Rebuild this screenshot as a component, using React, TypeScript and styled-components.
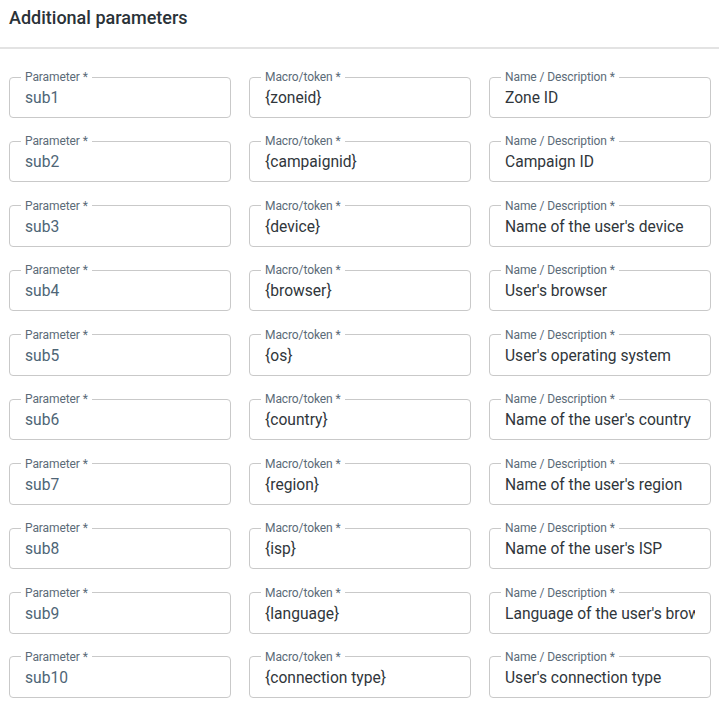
import React from "react";
import styled, { createGlobalStyle } from "styled-components";

const GlobalStyle = createGlobalStyle`
  html, body {
    margin: 0;
    padding: 0;
    background: #ffffff;
  }
  body {
    font-family: Roboto, "Noto Sans", "Liberation Sans", sans-serif;
    -webkit-font-smoothing: antialiased;
  }
`;

const Page = styled.div`
  width: 719px;
  background: #ffffff;
`;

const Header = styled.div`
  height: 47px;
  padding: 0 9px;
  display: flex;
  align-items: flex-start;
  box-sizing: border-box;
`;

const Title = styled.h2`
  margin: 0;
  padding-top: 6px;
  font-size: 18px;
  line-height: 24px;
  font-weight: 500;
  color: #2a3238;
`;

const Divider = styled.hr`
  margin: 0;
  border: 0;
  height: 2px;
  background: #e3e3e3;
`;

const Grid = styled.div`
  display: grid;
  grid-template-columns: repeat(3, 1fr);
  column-gap: 18px;
  row-gap: 17.44px;
  padding: 22px 8px 0 9px;
`;

const Fieldset = styled.fieldset`
  margin: 0;
  min-width: 0;
  padding: 0 15px;
  border: 1px solid #c9c9c9;
  border-radius: 4px;
`;

const Legend = styled.legend`
  margin-left: -4px;
  padding: 0 4px;
  font-size: 12px;
  line-height: 12px;
  color: #5b6b78;
  letter-spacing: -0.1px;
`;

const Value = styled.div<{ $muted?: boolean }>`
  height: 34px;
  line-height: 30px;
  font-size: 15.6px;
  letter-spacing: 0;
  white-space: nowrap;
  overflow: hidden;
  color: ${(p) => (p.$muted ? "#4e6576" : "#30363b")};
`;

type Row = { param: string; macro: string; name: string };

const rows: Row[] = [
  { param: "sub1", macro: "{zoneid}", name: "Zone ID" },
  { param: "sub2", macro: "{campaignid}", name: "Campaign ID" },
  { param: "sub3", macro: "{device}", name: "Name of the user's device" },
  { param: "sub4", macro: "{browser}", name: "User's browser" },
  { param: "sub5", macro: "{os}", name: "User's operating system" },
  { param: "sub6", macro: "{country}", name: "Name of the user's country" },
  { param: "sub7", macro: "{region}", name: "Name of the user's region" },
  { param: "sub8", macro: "{isp}", name: "Name of the user's ISP" },
  { param: "sub9", macro: "{language}", name: "Language of the user's browser" },
  { param: "sub10", macro: "{connection type}", name: "User's connection type" },
];

function Field({ label, value, muted }: { label: string; value: string; muted?: boolean }) {
  return (
    <Fieldset>
      <Legend>{label} *</Legend>
      <Value $muted={muted}>{value}</Value>
    </Fieldset>
  );
}

export default function App() {
  return (
    <Page>
      <GlobalStyle />
      <Header>
        <Title>Additional parameters</Title>
      </Header>
      <Divider />
      <Grid>
        {rows.map((r) => (
          <React.Fragment key={r.param}>
            <Field label="Parameter" value={r.param} muted />
            <Field label="Macro/token" value={r.macro} />
            <Field label="Name / Description" value={r.name} />
          </React.Fragment>
        ))}
      </Grid>
    </Page>
  );
}
